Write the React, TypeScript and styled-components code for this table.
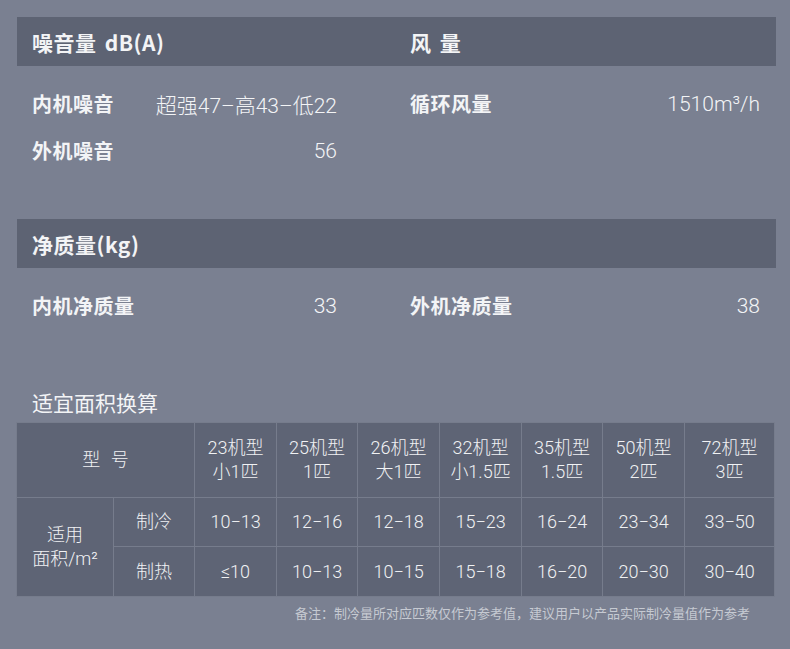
import React from "react";
import styled, { createGlobalStyle } from "styled-components";

const GlobalStyle = createGlobalStyle`
  html, body { margin: 0; padding: 0; background: #7a8091; }
  body { font-family: Roboto, "Noto Sans CJK SC", sans-serif; color: #f3f4f6; }
`;

const Page = styled.div`
  width: 790px;
  height: 649px;
  background: #7a8091;
  overflow: hidden;
  padding-top: 17px;
  box-sizing: border-box;
`;

const Section = styled.section`
  width: 759px;
  margin-left: 17px;
  & + & { margin-top: 45px; }
`;

const TwoCol = styled.div`
  display: grid;
  grid-template-columns: 305px 350px;
  column-gap: 73px;
  padding: 0 16px 0 15px;
  box-sizing: border-box;
`;

const HeaderBar = styled(TwoCol)`
  background: #5d6373;
  height: 49px;
  align-items: center;
  font-family: "Noto Sans CJK SC", sans-serif;
  font-weight: 700;
  font-size: 21px;
  letter-spacing: 0.5px;
  word-spacing: 3px;
`;

const Rows = styled(TwoCol)`
  padding-top: 14px;
  grid-auto-rows: 47px;
`;

const Item = styled.div`
  display: flex;
  justify-content: space-between;
  align-items: center;
`;

const Label = styled.span`
  font-family: "Noto Sans CJK SC", sans-serif;
  font-weight: 700;
  font-size: 20px;
  letter-spacing: 0.5px;
`;

const Value = styled.span`
  font-family: Roboto, "Noto Sans CJK SC", sans-serif;
  font-weight: 300;
  font-size: 21px;
`;

const Title = styled.div`
  margin: 58px 0 0 32px;
  font-family: "Noto Sans CJK SC", sans-serif;
  font-weight: 400;
  font-size: 21px;
  line-height: 30px;
`;

const Table = styled.table`
  margin: 5px 0 0 16px;
  width: 758px;
  border-collapse: collapse;
  table-layout: fixed;
  font-family: Roboto, "Noto Sans CJK SC", sans-serif;
  font-size: 18px;
  font-weight: 300;
  color: #f1f2f4;
`;

const Row = styled.tr<{ $h: number }>`
  height: ${(p) => p.$h}px;
`;

const Cell = styled.td`
  background: #5e6475;
  border: 1px solid #767c8c;
  text-align: center;
  vertical-align: middle;
  padding: 0;
  line-height: 24px;
  word-spacing: 6px;
`;

const Note = styled.div`
  margin-top: 6px;
  padding-right: 40px;
  text-align: right;
  font-family: "Noto Sans CJK SC", sans-serif;
  font-size: 13px;
  line-height: 20px;
  color: #c6cad2;
`;

const widths = [97, 81, 82, 81, 82, 82, 81, 82, 90];

const models = [
  ["23机型", "小1匹"],
  ["25机型", "1匹"],
  ["26机型", "大1匹"],
  ["32机型", "小1.5匹"],
  ["35机型", "1.5匹"],
  ["50机型", "2匹"],
  ["72机型", "3匹"],
];

const cooling = ["10−13", "12−16", "12−18", "15−23", "16−24", "23−34", "33−50"];
const heating = ["≤10", "10−13", "10−15", "15−18", "16−20", "20−30", "30−40"];

export default function App() {
  return (
    <Page>
      <GlobalStyle />
      <Section>
        <HeaderBar>
          <span>噪音量 dB(A)</span>
          <span>风 量</span>
        </HeaderBar>
        <Rows>
          <Item>
            <Label>内机噪音</Label>
            <Value>超强47–高43–低22</Value>
          </Item>
          <Item>
            <Label>循环风量</Label>
            <Value>1510m³/h</Value>
          </Item>
          <Item>
            <Label>外机噪音</Label>
            <Value>56</Value>
          </Item>
          <div />
        </Rows>
      </Section>
      <Section>
        <HeaderBar>
          <span>净质量(kg)</span>
        </HeaderBar>
        <Rows>
          <Item>
            <Label>内机净质量</Label>
            <Value>33</Value>
          </Item>
          <Item>
            <Label>外机净质量</Label>
            <Value>38</Value>
          </Item>
        </Rows>
      </Section>
      <Title>适宜面积换算</Title>
      <Table>
        <colgroup>
          {widths.map((w, i) => (
            <col key={i} style={{ width: w }} />
          ))}
        </colgroup>
        <tbody>
          <Row $h={75}>
            <Cell colSpan={2}>型 号</Cell>
            {models.map(([a, b]) => (
              <Cell key={a}>
                {a}
                <br />
                {b}
              </Cell>
            ))}
          </Row>
          <Row $h={49}>
            <Cell rowSpan={2}>
              适用
              <br />
              面积/m²
            </Cell>
            <Cell>制冷</Cell>
            {cooling.map((v, i) => (
              <Cell key={i}>{v}</Cell>
            ))}
          </Row>
          <Row $h={50}>
            <Cell>制热</Cell>
            {heating.map((v, i) => (
              <Cell key={i}>{v}</Cell>
            ))}
          </Row>
        </tbody>
      </Table>
      <Note>备注：制冷量所对应匹数仅作为参考值，建议用户以产品实际制冷量值作为参考</Note>
    </Page>
  );
}
